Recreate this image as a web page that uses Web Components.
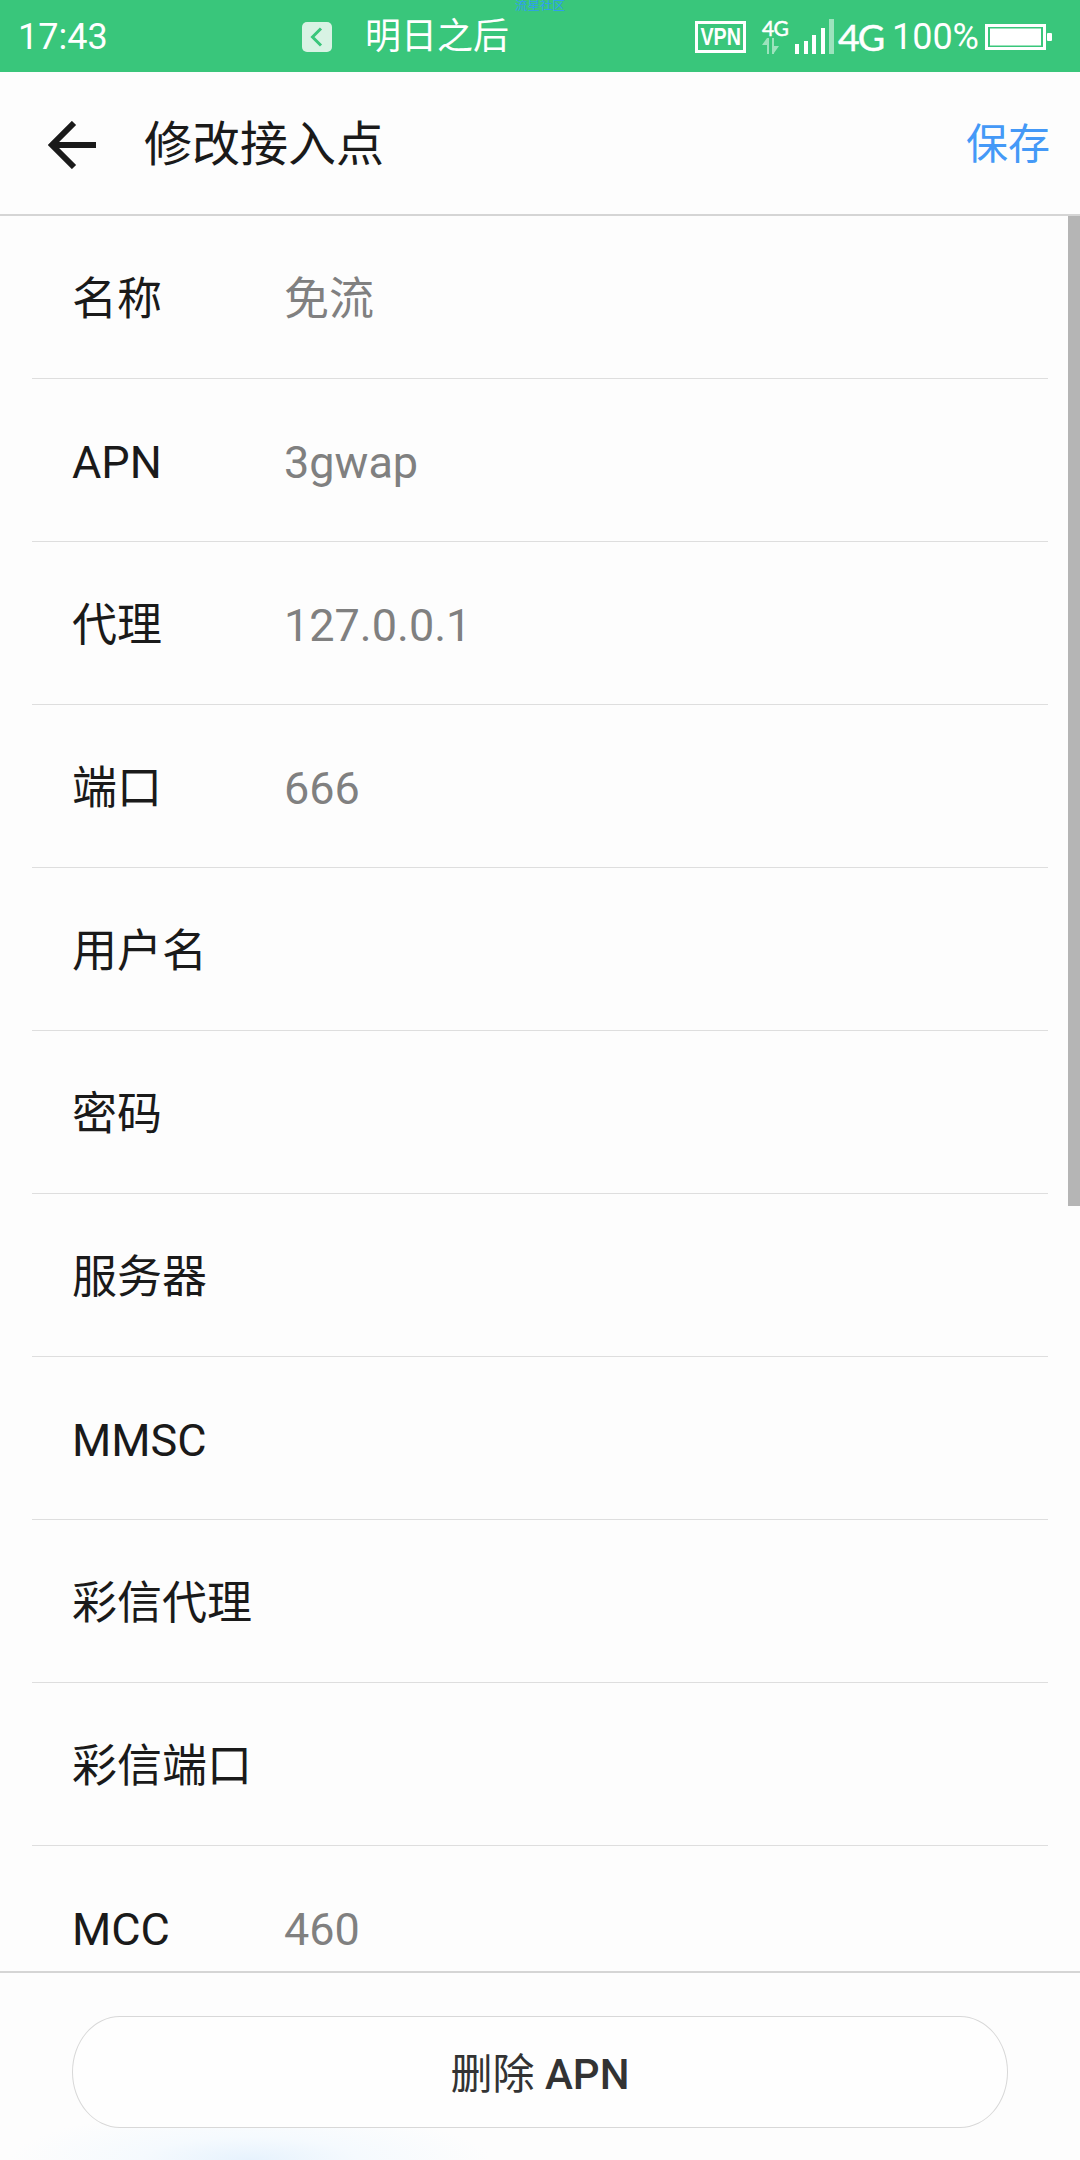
<!DOCTYPE html>
<html lang="zh-CN">
<head>
<meta charset="utf-8">
<title>修改接入点</title>
<style>
  body {
    margin: 0;
    background: #fdfdfd;
    font-family: Roboto, "Noto Sans CJK SC", sans-serif;
    color: #1a1a1a;
  }
</style>
</head>
<body>
<apn-screen></apn-screen>

<script>
const define = (name, html) => {
  const template = document.createElement('template');
  template.innerHTML = html;
  customElements.define(name, class extends HTMLElement {
    constructor() {
      super();
      this.attachShadow({ mode: 'open' });
      this.shadowRoot.appendChild(template.content.cloneNode(true));
    }
  });
};

define('status-bar', `
  <style>
    :host {
      display: flex;
      position: relative;
      box-sizing: border-box;
      height: 72px;
      padding: 2px 28px 0 18px;
      align-items: center;
      background: #39c67b;
      color: #fff;
      font-size: 36px;
      line-height: 42px;
      white-space: nowrap;
    }
    svg { display: block; flex: none; }
    .back { margin: 0 33px 0 auto; }
    .time { width: 92px; }
    .back { margin-left: 192px; }
    .app { margin-right: auto; }
    .tag {
      position: absolute;
      left: 515px;
      top: -1px;
      font-size: 12.5px;
      line-height: 14px;
      color: #2f9df0;
    }
    .vpn {
      box-sizing: border-box;
      width: 51px;
      height: 32px;
      border: 3px solid #fff;
      margin-right: 16px;
      display: flex;
      justify-content: center;
      align-items: center;
      font: 700 24px/26px "Liberation Sans", sans-serif;
    }
    .vpn span { transform: scaleX(.82); }
    .data { width: 27px; margin-right: 6px; }
    .data span { display: block; font: 400 21px/18px Lato, sans-serif; letter-spacing: -.5px; -webkit-text-stroke: .5px #fff; }
    .net { font: 400 37.5px/42px Lato, sans-serif; letter-spacing: -2px; width: 54px; margin-left: 4px; -webkit-text-stroke: .5px #fff; }
    .battery { margin-left: 6px; }
  </style>
  <span class="time">17:43</span>
  <svg class="back" width="30" height="30" viewBox="0 0 30 30">
    <rect width="30" height="30" rx="5" fill="#d8f3e4"/>
    <path d="M19 6.500 10.500 15 19 23.500" fill="none" stroke="#39c67b" stroke-width="3"/>
  </svg>
  <span class="app">明日之后</span>
  <span class="tag">流星社区</span>
  <div class="vpn"><span>VPN</span></div>
  <div class="data">
    <span>4G</span>
    <svg width="18" height="18" viewBox="0 0 18 18" fill="#9ce3bd">
      <path d="M0 8 5 1h2v16H5V8zM10 1h2v8h5l-5 7v1h-2z"/>
    </svg>
  </div>
  <svg width="39" height="36" viewBox="0 0 39 36" fill="#fff">
    <path d="M0 25h4v10H0zM9 22h4v13H9zM17 16h4v19h-4zM26 9h4v26h-4z"/>
    <path d="M34 0h5v35h-5z" fill="#9ce3bd"/>
  </svg>
  <span class="net">4G</span>
  <span>100%</span>
  <svg class="battery" width="67" height="26" viewBox="0 0 67 26">
    <rect x="1.500" y="1.500" width="58" height="23" fill="none" stroke="#fff" stroke-width="3"/>
    <path d="M5 4.500h51v17H5z" fill="#fff"/>
    <rect x="62" y="9" width="5" height="8" rx="1" fill="#fff"/>
  </svg>
`);

define('title-bar', `
  <style>
    :host {
      display: flex;
      box-sizing: border-box;
      height: 144px;
      padding: 4px 30px 0 48px;
      align-items: center;
      border-bottom: 2px solid #d5d5d5;
    }
    svg { display: block; margin-right: 48px; }
    h1 { margin: 0; font-size: 48px; font-weight: 400; line-height: 56px; }
    .action { margin-left: auto; font-size: 42px; line-height: 50px; color: #4499f7; }
  </style>
  <svg width="48" height="48" viewBox="0 0 48 48" fill="none" stroke="#1a1a1a" stroke-width="6">
    <path d="M26 2 4 24l22 22M4 24h44"/>
  </svg>
  <h1><slot></slot></h1>
  <span class="action"><slot name="action"></slot></span>
`);

define('apn-row', `
  <style>
    :host {
      display: flex;
      box-sizing: border-box;
      height: 163px;
      flex: none;
      margin: 0 32px;
      padding: 6px 40px 0;
      align-items: center;
      border-bottom: 1px solid #dedede;
      font-size: 45px;
      line-height: 54px;
    }
    .label { min-width: 212px; }
    .value { color: #808080; }
  </style>
  <span class="label"><slot></slot></span>
  <span class="value"><slot name="value"></slot></span>
`);

define('apn-list', `
  <style>
    :host {
      display: flex;
      flex-direction: column;
      position: relative;
      overflow: hidden;
    }
    .thumb {
      position: absolute;
      right: 0;
      top: 0;
      width: 12px;
      height: 990px;
      background: #b5b5b5;
    }
  </style>
  <slot></slot>
  <div class="thumb"></div>
`);

define('bottom-bar', `
  <style>
    :host {
      display: block;
      box-sizing: border-box;
      height: 189px;
      padding: 43px 72px 0;
      border-top: 2px solid #d5d5d5;
      background: radial-gradient(ellipse 240px 50px at 250px 100%, #e6f2fd, #f5fafe 45%, #fdfdfd);
    }
    button {
      display: block;
      box-sizing: border-box;
      width: 100%;
      height: 112px;
      padding: 5px 0 0;
      border: 1.5px solid #d8d8d8;
      border-radius: 48px / 56px;
      background: #fefefe;
      color: #333;
      font: 500 42px/50px Roboto, "Noto Sans CJK SC", sans-serif;
    }
    ::slotted(span) { font-weight: 400; }
  </style>
  <button><slot></slot></button>
`);

define('apn-screen', `
  <style>
    :host {
      display: flex;
      flex-direction: column;
      width: 1080px;
      height: 2160px;
      overflow: hidden;
    }
    status-bar, title-bar, bottom-bar { flex: none; }
    apn-list { flex: 1; min-height: 0; }
  </style>
  <status-bar></status-bar>
  <title-bar>修改接入点<span slot="action">保存</span></title-bar>
  <apn-list>
    <apn-row>名称<span slot="value">免流</span></apn-row>
    <apn-row>APN<span slot="value">3gwap</span></apn-row>
    <apn-row>代理<span slot="value">127.0.0.1</span></apn-row>
    <apn-row>端口<span slot="value">666</span></apn-row>
    <apn-row>用户名</apn-row>
    <apn-row>密码</apn-row>
    <apn-row>服务器</apn-row>
    <apn-row>MMSC</apn-row>
    <apn-row>彩信代理</apn-row>
    <apn-row>彩信端口</apn-row>
    <apn-row>MCC<span slot="value">460</span></apn-row>
  </apn-list>
  <bottom-bar><span>删除</span> APN</bottom-bar>
`);
</script>
</body>
</html>
